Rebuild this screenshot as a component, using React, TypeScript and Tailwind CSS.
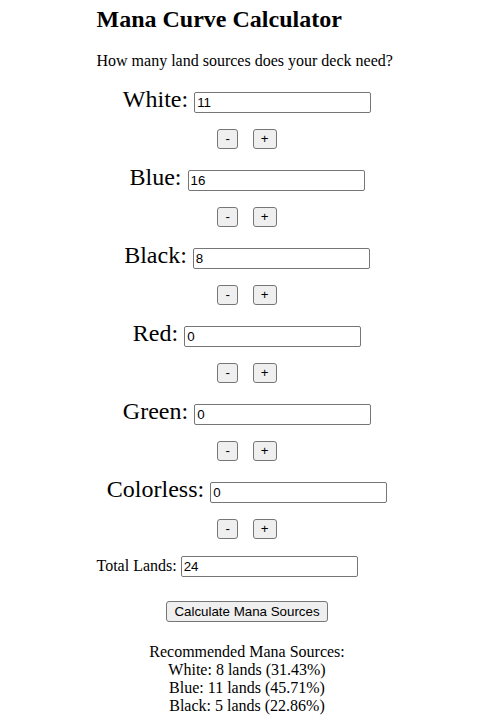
import { useState } from 'react'

const COLORS = ['White', 'Blue', 'Black', 'Red', 'Green', 'Colorless'] as const
type Color = (typeof COLORS)[number]

type Result = { color: Color; lands: number; pct: string }

function calculate(counts: Record<Color, number>, total: number): Result[] {
  const sum = COLORS.reduce((acc, c) => acc + counts[c], 0)
  if (!sum) return []
  return COLORS.filter((c) => counts[c] > 0).map((c) => ({
    color: c,
    lands: Math.round((total * counts[c]) / sum),
    pct: ((counts[c] / sum) * 100).toFixed(2)
  }))
}

const inputCls =
  "h-[21px] w-[177px] rounded-[2px] border border-[#767676] bg-white px-[2px] font-['Liberation_Sans',Arial,sans-serif] text-[13.33px] text-black outline-none"
const btnCls =
  "h-[20px] rounded-[3px] border border-[#767676] bg-[#efefef] px-[7px] font-['Liberation_Sans',Arial,sans-serif] text-[13.33px] leading-[16px] text-black hover:bg-[#e5e5e5]"

export default function App() {
  const [counts, setCounts] = useState<Record<Color, number>>({
    White: 11,
    Blue: 16,
    Black: 8,
    Red: 0,
    Green: 0,
    Colorless: 0
  })
  const [total, setTotal] = useState(24)
  const [results, setResults] = useState<Result[]>(() => calculate(counts, total))

  const bump = (c: Color, d: number) =>
    setCounts((prev) => ({ ...prev, [c]: Math.max(0, prev[c] + d) }))

  return (
    <div className="h-[715px] overflow-hidden bg-white font-['Liberation_Serif','Times_New_Roman',serif] text-black">
      <div className="mx-auto w-[310px] pl-[9px] pt-[5px]">
        <h2 className="text-[24px] font-bold leading-[28px]">Mana Curve Calculator</h2>
        <p className="mt-[19px] text-[16px] leading-[18px]">How many land sources does your deck need?</p>

        {/* Colour inputs */}
        <div className="mt-[15px] flex flex-col">
          {COLORS.map((c, i) => (
            <div key={c} className={i > 0 ? 'mt-[14px]' : ''}>
              <div className="flex h-[28px] items-baseline justify-center gap-[6px]">
                <label className="text-[24px] leading-[28px]">{c}:</label>
                <input
                  className={inputCls}
                  type="text"
                  value={counts[c]}
                  onChange={(e) =>
                    setCounts((prev) => ({ ...prev, [c]: parseInt(e.target.value) || 0 }))
                  }
                />
              </div>
              <div className="mt-[16px] flex justify-center gap-[15px]">
                <button className={btnCls} onClick={() => bump(c, -1)}>-</button>
                <button className={btnCls} onClick={() => bump(c, 1)}>+</button>
              </div>
            </div>
          ))}
        </div>

        {/* Total */}
        <div className="mt-[17px] flex items-baseline gap-[4px]">
          <label className="text-[16px] leading-[18px]">Total Lands:</label>
          <input
            className={inputCls}
            type="text"
            value={total}
            onChange={(e) => setTotal(parseInt(e.target.value) || 0)}
          />
        </div>

        <div className="mt-[24px] flex justify-center">
          <button className={`${btnCls} h-[21px]`} onClick={() => setResults(calculate(counts, total))}>
            Calculate Mana Sources
          </button>
        </div>

        {/* Results */}
        <div className="mt-[21px] text-center text-[16px] leading-[18px]">
          <div>Recommended Mana Sources:</div>
          {results.map((r) => (
            <div key={r.color}>
              {r.color}: {r.lands} lands ({r.pct}%)
            </div>
          ))}
        </div>
      </div>
    </div>
  )
}
